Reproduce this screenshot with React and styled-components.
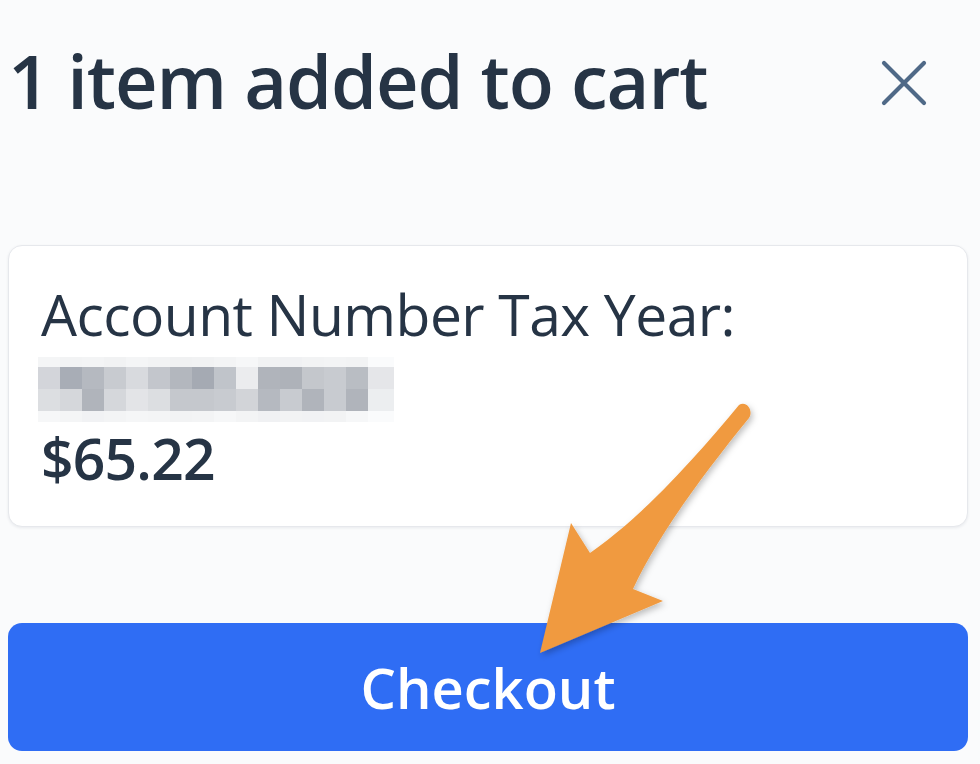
import styled, { createGlobalStyle } from "styled-components";

const GlobalStyle = createGlobalStyle`
  html, body {
    margin: 0;
    padding: 0;
    background: #fafbfc;
  }
  body {
    font-family: "Open Sans", "Noto Sans", sans-serif;
    color: #263445;
  }
`;

// pixelated account number, one row per array
const mosaic = [
  ["#f4f5f6", "#f2f3f4", "#f3f4f5", "#f1f2f3", "#f4f5f6", "#f2f3f4", "#f0f1f2", "#f1f2f3", "#f3f4f5", "#f6f7f8", "#f1f2f3", "#f0f1f3", "#f2f3f4", "#f3f4f5", "#f2f3f4", "#fafbfc"],
  ["#d3d5da", "#a8adb6", "#b5b9c0", "#c8cbd0", "#d8dade", "#c3c6cc", "#b3b7be", "#a5aab3", "#c0c4ca", "#ebecee", "#b0b4bb", "#aeb2b9", "#c4c7cc", "#c8cbd0", "#b9bdc3", "#e5e6e9"],
  ["#dcdee1", "#d5d7db", "#b0b4bb", "#d5d7db", "#e3e4e7", "#dcdee1", "#c5c8cd", "#c5c8cd", "#c8cbd0", "#d2d4d8", "#b5b9c0", "#c8cbd0", "#b0b4bb", "#c8cbd0", "#b0b4bb", "#eceef0"],
  ["#f6f7f8", "#f4f5f6", "#f1f2f4", "#f3f4f5", "#f5f6f7", "#f4f5f6", "#f2f3f4", "#f3f4f5", "#f6f7f8", "#f3f4f5", "#f0f1f3", "#f2f3f4", "#f1f2f4", "#f2f3f4", "#f6f7f8", "#fafbfc"],
];

export default function App() {
  return (
    <>
      <GlobalStyle />
      <Page>
        <Header>
          <Title>1 item added to cart</Title>
          <CloseButton aria-label="Close">
            <svg width="46" height="46" viewBox="0 0 46 46" fill="none">
              <path d="M3 3 L43 43 M43 3 L3 43" stroke="#4f6987" strokeWidth="4.2" strokeLinecap="round" />
            </svg>
          </CloseButton>
        </Header>

        <ItemCard>
          <ItemLine>Account Number Tax Year:</ItemLine>
          <RedactedLine>
            <Mosaic>
              {mosaic.map((row, r) =>
                row.map((c, i) => <Tile key={r + "-" + i} $c={c} />)
              )}
            </Mosaic>
          </RedactedLine>
          <Price>$65.22</Price>
        </ItemCard>

        <CheckoutButton>Checkout</CheckoutButton>

        <Pointer viewBox="0 0 980 764" aria-hidden="true">
          <defs>
            <filter id="arrowShadow" x="-20%" y="-20%" width="140%" height="140%">
              <feDropShadow dx="2" dy="3" stdDeviation="3" floodColor="#000" floodOpacity="0.25" />
            </filter>
          </defs>
          <path
            d="M739 405 C700 452 645 515 590 553 L571 523 L540 653 L663 601 L633 589 C658 535 705 472 749 418 C754 410 746 400 739 405 Z"
            fill="#f09a3f"
            filter="url(#arrowShadow)"
          />
        </Pointer>
      </Page>
    </>
  );
}

const Page = styled.div`
  position: relative;
  width: 980px;
  height: 764px;
  box-sizing: border-box;
  padding: 44px 12px 0 8px;
  overflow: hidden;
`;

const Header = styled.div`
  display: flex;
  align-items: center;
  justify-content: space-between;
`;

const Title = styled.h1`
  margin: 0;
  font-size: 74px;
  line-height: 74px;
  font-weight: 600;
  letter-spacing: -1.1px;
  color: #263445;
`;

const CloseButton = styled.button`
  display: flex;
  align-items: center;
  justify-content: center;
  margin: 4px 41px 0 0;
  padding: 0;
  border: none;
  background: transparent;
  cursor: pointer;
`;

const ItemCard = styled.div`
  margin-top: 127px;
  padding: 32px;
  background: #ffffff;
  border: 1px solid #e6e8ec;
  border-radius: 14px;
  box-shadow: 0 1px 3px rgba(30, 40, 60, 0.08);
`;

const ItemLine = styled.div`
  font-size: 57px;
  line-height: 72px;
  font-weight: 400;
  letter-spacing: -0.55px;
  color: #263445;
`;

const RedactedLine = styled.div`
  height: 72px;
  display: flex;
  align-items: flex-end;
`;

const Mosaic = styled.div`
  display: grid;
  grid-template-columns: repeat(15, 22px) 26px;
  grid-template-rows: 10px 22px 22px 11px;
  margin-left: -3px;
`;

const Tile = styled.div`
  background: ${({ $c }) => $c};
`;

const Price = styled.div`
  font-size: 57px;
  line-height: 72px;
  font-weight: 600;
  letter-spacing: -0.8px;
  color: #263445;
`;

const CheckoutButton = styled.button`
  display: flex;
  align-items: center;
  justify-content: center;
  width: 100%;
  height: 128px;
  margin-top: 96px;
  border: none;
  border-radius: 14px;
  background: #2f6df4;
  color: #ffffff;
  font-family: "Open Sans", "Noto Sans", sans-serif;
  font-size: 56px;
  font-weight: 600;
  cursor: pointer;
`;

const Pointer = styled.svg`
  position: absolute;
  top: 0;
  left: 0;
  width: 980px;
  height: 764px;
  pointer-events: none;
`;
